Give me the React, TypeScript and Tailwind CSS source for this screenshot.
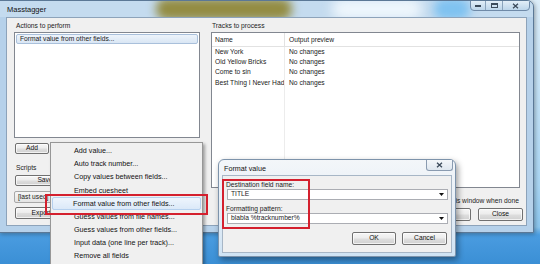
import React from "react";

const btn =
  "flex items-center justify-center rounded-[2px] border border-[#707070] bg-[linear-gradient(180deg,#f6f6f6_0%,#ececec_48%,#dedede_52%,#d0d0d0_100%)] text-[#111] shadow-[inset_0_0_0_1px_rgba(255,255,255,0.7)]";

function Arrow() {
  return (
    <svg width="5" height="3" viewBox="0 0 5 3">
      <polygon points="0,0 5,0 2.5,3" fill="#111" />
    </svg>
  );
}

function CloseGlyph() {
  return (
    <svg width="7" height="6" viewBox="0 0 7 6">
      <path d="M1 0.8 L6 5.2 M6 0.8 L1 5.2" stroke="#3b4a5a" strokeWidth="1.3" fill="none" />
    </svg>
  );
}

const tracks = ["New York", "Old Yellow Bricks", "Come to sin", "Best Thing I Never Had"];

const menuItems = [
  "Add value...",
  "Auto track number...",
  "Copy values between fields...",
  "Embed cuesheet",
  "Format value from other fields...",
  "Guess values from file names...",
  "Guess values from other fields...",
  "Input data (one line per track)...",
  "Remove all fields",
];

export default function App() {
  return (
    <div className="relative w-[540px] h-[264px] overflow-hidden bg-[linear-gradient(180deg,#dcedf9_0%,#a9d5f3_70%,#8cc6ee_86%,#4a9ce0_89%,#3b8fd5_100%)] font-['Liberation_Sans',Arial,sans-serif] text-[6.7px] leading-none text-[#1b1b1b]">
      {/* Main window */}
      <div className="absolute left-[-1px] top-0 w-[535px] h-[233px] flex flex-col rounded-tr-[7px] border border-[#5b7896] bg-[#b6d1ea] shadow-[1px_1px_4px_rgba(0,0,0,0.35)]">
        <div className="relative h-[16px] shrink-0 flex items-start overflow-hidden rounded-tr-[6px] bg-[#c4dbef]">
          <span className="w-[60px] shrink-0 pl-[7px] pt-[5px] text-[7.5px] text-[#111]">Masstagger</span>
          {/* blurred desktop showing through the glass */}
          <div className="ml-[96px] w-[136px] h-[22px] -mt-[3px] shrink-0 rounded-[10px] bg-[#938c42] blur-[5px]" />
          <div className="ml-[40px] w-[90px] h-[22px] -mt-[3px] shrink-0 rounded-[10px] bg-[#eef6fc] blur-[6px]" />
          <div className="ml-[12px] w-[36px] h-[22px] -mt-[3px] shrink-0 rounded-[10px] bg-[#7fc2f0] blur-[5px]" />
          <div className="flex-1" />
          <div className="relative mr-[3px] flex h-[11px] -mt-px rounded-b-[4px] border border-[#6f8aa8] bg-linear-to-b from-[#e2eef8] to-[#bcd5ea] overflow-hidden">
            <div className="w-[16px] flex items-end justify-center pb-[3px] border-r border-[#8aa3bc]">
              <div className="w-[6px] h-[2px] bg-[#3b4a5a]" />
            </div>
            <div className="w-[17px] flex items-center justify-center border-r border-[#8aa3bc]">
              <div className="w-[7px] h-[5px] border border-[#3b4a5a] border-t-2" />
            </div>
            <div className="w-[27px] flex items-center justify-center">
              <CloseGlyph />
            </div>
          </div>
        </div>
        <div className="flex-1 mx-[6px] mb-[6px] border border-[#8da3ba] bg-[#f0f0f0] flex gap-[11px] pl-[7px] pr-[3px] pt-[3px]">
          {/* Left column */}
          <div className="w-[186px] flex flex-col">
            <div className="h-[10px] flex items-center pl-[2px]">Actions to perform</div>
            <div className="mt-[1px] h-[106px] border border-[#828790] bg-white p-px">
              <div className="h-[10px] flex items-center pl-[3px] rounded-[2px] border border-[#a9c0db] bg-[linear-gradient(180deg,#eef4fb,#d9e6f4)]">
                Format value from other fields...
              </div>
            </div>
            <div className={`${btn} mt-[5px] ml-px h-[11px] w-[34px]`}>Add</div>
            <div className="mt-[9px] h-[10px] flex items-center pl-[2px]">Scripts</div>
            <div className={`${btn} mt-[2px] ml-px h-[11px] w-[60px]`}>Save</div>
            <div className="mt-[5px] h-[12px] w-[120px] flex items-center pl-[3px] border border-[#a8a8a8] rounded-[2px] bg-[linear-gradient(180deg,#f6f6f6,#e4e4e4)]">
              [last used]
            </div>
            <div className={`${btn} mt-[4px] ml-px h-[12px] w-[60px]`}>Export to</div>
          </div>
          {/* Right column */}
          <div className="flex-1 flex flex-col">
            <div className="h-[10px] flex items-center pl-px">Tracks to process</div>
            <div className="mt-[1px] mr-[3px] h-[156px] border border-[#828790] bg-white flex flex-col">
              <div className="h-[14px] shrink-0 flex border-b border-[#e2e2e2] text-[#222]">
                <div className="w-[73px] flex items-center pl-[3px] pt-px border-r border-[#e2e2e2]">Name</div>
                <div className="flex-1 flex items-center pl-[4px] pt-px">Output preview</div>
              </div>
              <div className="flex-1 flex text-[#222]">
                <div className="w-[73px] border-r border-[#ececec] flex flex-col">
                  {tracks.map((t) => (
                    <div key={t} className="h-[10.3px] flex items-center pl-[3px] whitespace-nowrap overflow-hidden">
                      {t}
                    </div>
                  ))}
                </div>
                <div className="flex-1 flex flex-col">
                  {tracks.map((t) => (
                    <div key={t} className="h-[10.3px] flex items-center pl-[4px]">
                      No changes
                    </div>
                  ))}
                </div>
              </div>
            </div>
            <div className="mt-[8px] h-[10px] flex items-center justify-end pr-[4px] gap-[4px]">
              <div className="w-[8px] h-[8px] border border-[#8e8f8f] bg-white" />
              <span>Close this window when done</span>
            </div>
            <div className="mt-[2px] h-[13px] flex justify-end gap-[7px]">
              <div className={`${btn} w-[60px]`}>Run</div>
              <div className={`${btn} w-[45px]`}>Close</div>
            </div>
          </div>
        </div>
      </div>

      {/* Context menu */}
      <div className="absolute left-[50px] top-[142px] w-[153px] h-[130px] border border-[#979797] bg-[#f0f0f0] pt-[1px] shadow-[2px_2px_3px_rgba(0,0,0,0.35)] text-[7.2px] text-[#111]">
        {menuItems.map((m, i) => (
          <div
            key={m}
            className={
              i === 4
                ? "h-[13.2px] mx-[1px] flex items-center pl-[20px] rounded-[2px] border border-[#b5d0ee] bg-[linear-gradient(180deg,#eef5fd,#dbe9f8)]"
                : "h-[13.2px] mx-[1px] flex items-center pl-[21px] border border-transparent"
            }
          >
            {m}
          </div>
        ))}
      </div>

      {/* Format value dialog */}
      <div className="absolute left-[218px] top-[159px] w-[238px] h-[98px] flex flex-col rounded-t-[6px] rounded-b-[2px] border border-[#7d93ab] bg-linear-to-b from-[#f3f6f9] via-[#e6eef6] to-[#cfe3f4] shadow-[2px_3px_6px_rgba(0,0,0,0.4)]">
        <div className="h-[15px] shrink-0 flex items-start">
          <span className="pl-[5px] pt-[5px] text-[7.2px] text-[#111]">Format value</span>
          <div className="ml-auto mr-[2px] w-[27px] h-[11px] flex items-center justify-center rounded-b-[3px] border border-t-0 border-[#8a9bb0] bg-linear-to-b from-[#f4f7fa] to-[#dfe7ef]">
            <CloseGlyph />
          </div>
        </div>
        <div className="flex-1 mx-[3px] mb-[3px] border border-[#a7b6c6] bg-[#f0f0f0] flex flex-col pl-[3px] pr-[3px] pt-[5px]">
          <div className="h-[8px] flex items-center">Destination field name:</div>
          <div className="h-[11px] ml-px flex items-center justify-between pl-[3px] pr-[3px] border border-[#abadb3] bg-white">
            <span>TITLE</span>
            <Arrow />
          </div>
          <div className="mt-[5px] h-[8px] flex items-center">Formatting pattern:</div>
          <div className="h-[11px] ml-px flex items-center justify-between pl-[3px] pr-[3px] border border-[#abadb3] bg-white">
            <span>blabla %tracknumber%</span>
            <Arrow />
          </div>
          <div className="mt-[8px] h-[13px] flex justify-end gap-[6px] pr-px">
            <div className={`${btn} w-[44px]`}>OK</div>
            <div className={`${btn} w-[45px]`}>Cancel</div>
          </div>
        </div>
      </div>

      {/* Red annotation rectangles */}
      <div className="absolute left-[45px] top-[194px] w-[163px] h-[21px] border-2 border-[#d4202e]" />
      <div className="absolute left-[222px] top-[179px] w-[88px] h-[50px] border-2 border-[#d4202e]" />
    </div>
  );
}
